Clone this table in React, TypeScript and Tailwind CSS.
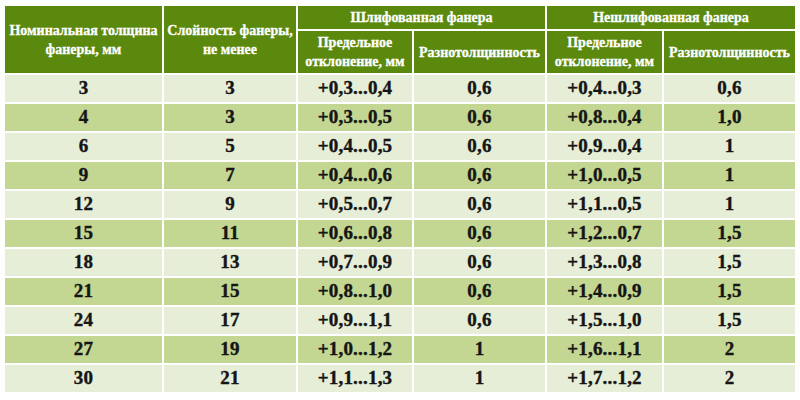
const ROWS: string[][] = [
  ["3", "3", "+0,3...0,4", "0,6", "+0,4...0,3", "0,6"],
  ["4", "3", "+0,3...0,5", "0,6", "+0,8...0,4", "1,0"],
  ["6", "5", "+0,4...0,5", "0,6", "+0,9...0,4", "1"],
  ["9", "7", "+0,4...0,6", "0,6", "+1,0...0,5", "1"],
  ["12", "9", "+0,5...0,7", "0,6", "+1,1...0,5", "1"],
  ["15", "11", "+0,6...0,8", "0,6", "+1,2...0,7", "1,5"],
  ["18", "13", "+0,7...0,9", "0,6", "+1,3...0,8", "1,5"],
  ["21", "15", "+0,8...1,0", "0,6", "+1,4...0,9", "1,5"],
  ["24", "17", "+0,9...1,1", "0,6", "+1,5...1,0", "1,5"],
  ["27", "19", "+1,0...1,2", "1", "+1,6...1,1", "2"],
  ["30", "21", "+1,1...1,3", "1", "+1,7...1,2", "2"],
];

const head =
  "bg-[#5a890d] text-white flex items-center justify-center text-center text-[14px] leading-[19px] font-bold [-webkit-text-stroke:0.3px_white]";

export default function App() {
  return (
    <div className="w-[800px] h-[400px] bg-white pt-[6px] pl-[5px] font-[family-name:Liberation_Serif,serif]">
      <div className="grid grid-cols-[157px_132px_114px_131px_115px_131px] grid-rows-[23px_42px] auto-rows-[27px] gap-[2px] w-[790px]">
        <div className={`${head} row-span-2`}>Номинальная толщина<br />фанеры, мм</div>
        <div className={`${head} row-span-2`}>Слойность фанеры,<br />не менее</div>
        <div className={`${head} col-span-2`}>Шлифованная фанера</div>
        <div className={`${head} col-span-2`}>Нешлифованная фанера</div>
        <div className={head}>Предельное<br />отклонение, мм</div>
        <div className={head}>Разнотолщинность</div>
        <div className={head}>Предельное<br />отклонение, мм</div>
        <div className={head}>Разнотолщинность</div>
        {ROWS.map((row, i) =>
          row.map((cell, j) => (
            <div
              key={`${i}-${j}`}
              className={`flex items-center justify-center text-[19px] font-bold text-[#151515] tracking-[0.2px] [-webkit-text-stroke:0.4px_#151515] ${
                i % 2 === 0 ? "bg-[#e6eed8]" : "bg-[#c3d792]"
              }`}
            >
              {cell}
            </div>
          ))
        )}
      </div>
    </div>
  );
}
